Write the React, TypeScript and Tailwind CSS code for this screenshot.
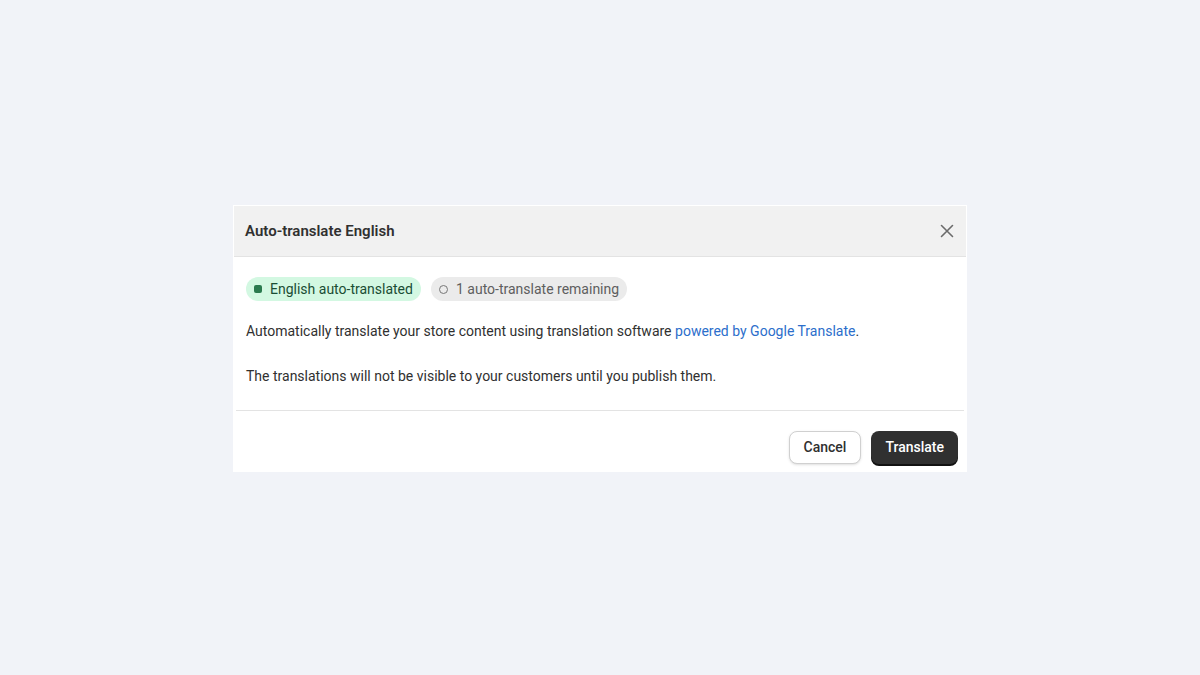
export default function App() {
  return (
    <div className="w-[1200px] h-[675px] bg-[#f1f3f8] flex items-start justify-center pt-[205px]" style={{ fontFamily: 'Roboto, "Noto Sans", sans-serif' }}>
      <div className="w-[734px] bg-white">
        <div className="h-[51px] bg-[#f1f1f1] border-b border-[#e3e3e3] flex items-center justify-between pl-[11px] pr-[12px] mx-[1px] mt-[1px]">
          <span className="text-[15px] font-semibold text-[#303030]">Auto-translate English</span>
          <svg width="14" height="14" viewBox="0 0 14 14" stroke="#6b6b6b" strokeWidth="1.6" strokeLinecap="round"><path d="M1.5 1.5l11 11M12.5 1.5l-11 11" /></svg>
        </div>
        <div className="px-[10px] pt-[20px] pb-[23px] text-[14px] text-[#303030] border-b border-[#e3e3e3] mx-[3px]">
          <div className="flex gap-[10px]">
            <span className="h-[24px] rounded-full bg-[#d3f8e2] text-[#1a4d34] px-[8px] flex items-center gap-[8px]">
              <span className="w-[8px] h-[8px] rounded-[2px] bg-[#2a7a4e]" />English auto-translated
            </span>
            <span className="h-[24px] rounded-full bg-[#ebebeb] text-[#5e5e5e] px-[8px] flex items-center gap-[8px]">
              <span className="w-[9px] h-[9px] rounded-full border-[1.5px] border-[#777]" />1 auto-translate remaining
            </span>
          </div>
          <p className="mt-[20px]">Automatically translate your store content using translation software <span className="text-[#2c6ecb]">powered by Google Translate</span>.</p>
          <p className="mt-[24px]">The translations will not be visible to your customers until you publish them.</p>
        </div>
        <div className="flex justify-end gap-[10px] pt-[20px] pb-[8px] pr-[9px]">
          <button className="h-[33px] px-[14px] rounded-[8px] border border-[#d0d0d0] bg-white text-[14px] font-medium text-[#303030] shadow-sm">Cancel</button>
          <button className="h-[33px] px-[14px] rounded-[8px] bg-[#303030] text-[14px] font-medium text-white shadow-[0_2px_0_#111]">Translate</button>
        </div>
      </div>
    </div>
  );
}
